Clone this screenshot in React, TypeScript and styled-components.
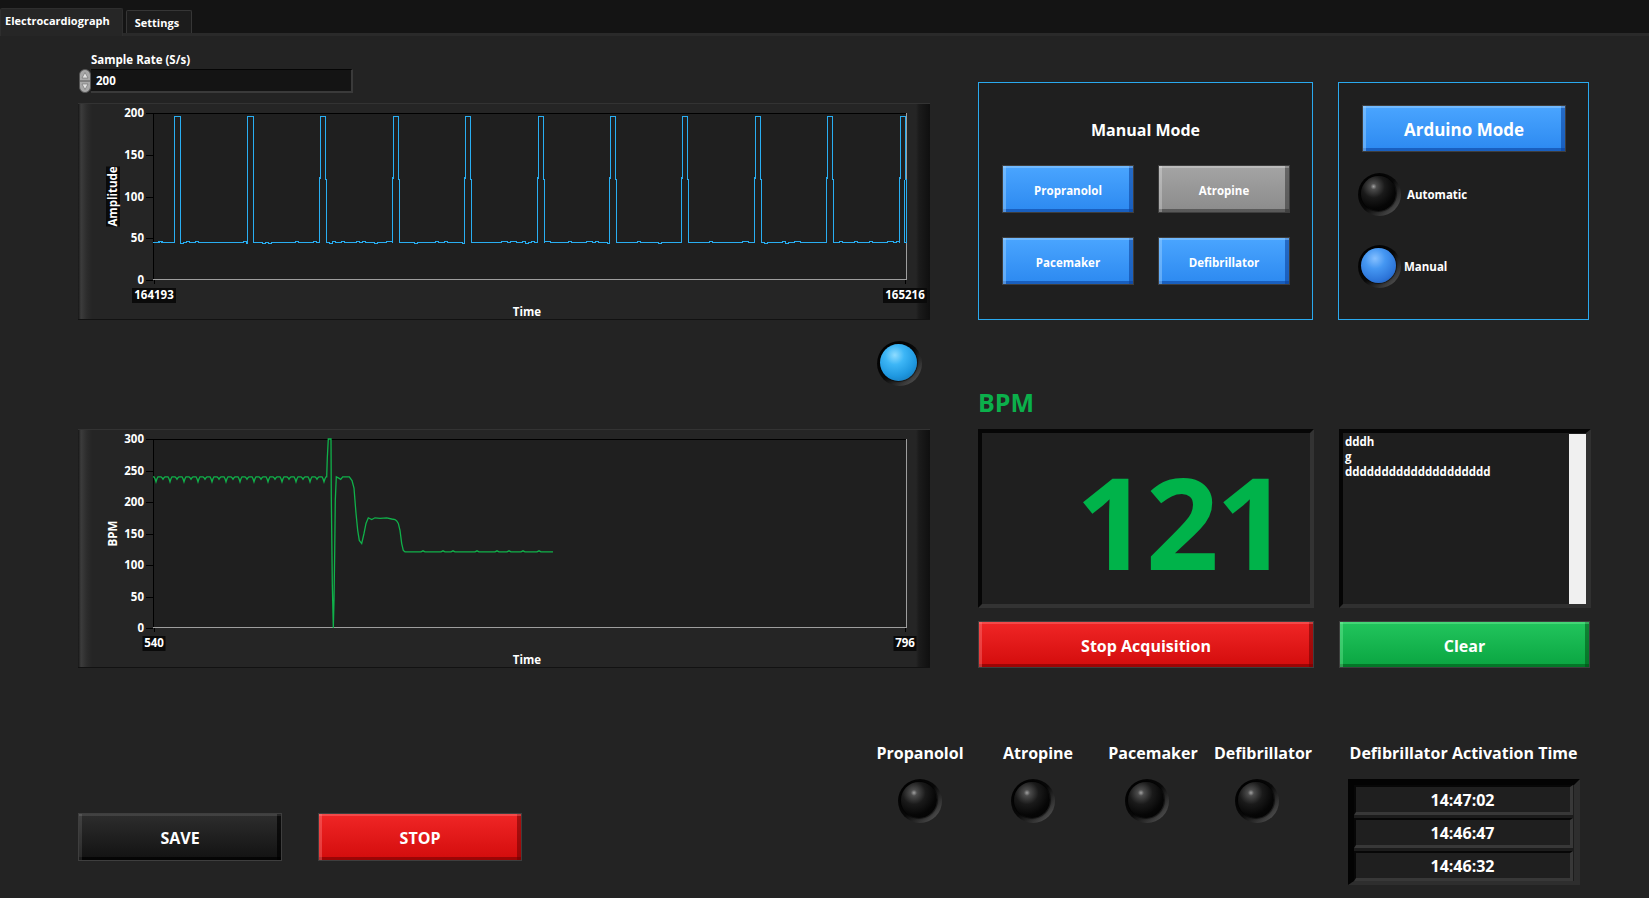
import React from "react";
import styled, { createGlobalStyle } from "styled-components";

const FONT = `"Open Sans", "Noto Sans", "DejaVu Sans", sans-serif`;

const GlobalStyle = createGlobalStyle`
  * { box-sizing: border-box; }
  html, body { margin: 0; padding: 0; background: #232323; }
  body { font-family: ${FONT}; color: #fff; }
`;

const Page = styled.div`
  width: 1649px;
  height: 898px;
  overflow: hidden;
  background: #232323;
  display: flex;
  flex-direction: column;
`;

/* ---------- tabs ---------- */
const TabBar = styled.div`
  height: 36px;
  flex: none;
  background: #141414;
  border-bottom: 3px solid #2a2a2a;
  display: flex;
  align-items: flex-end;
  gap: 3px;
`;

const Tab = styled.div<{ $active?: boolean }>`
  height: ${(p) => (p.$active ? 28 : 23)}px;
  margin-bottom: ${(p) => (p.$active ? -3 : 0)}px;
  padding: ${(p) => (p.$active ? "0 12px 4px 4px" : "0 12px 0 8px")};
  background: ${(p) => (p.$active ? "#262626" : "#1c1c1c")};
  border: 1px solid ${(p) => (p.$active ? "#2e2e2e" : "#363636")};
  border-bottom: none;
  border-radius: 2px 2px 0 0;
  font-size: 11px;
  font-weight: 700;
  color: #fff;
  display: flex;
  align-items: center;
`;

/* ---------- main layout ---------- */
const Main = styled.div`
  display: flex;
  gap: 48px;
  padding-left: 78px;
  height: 632px;
  flex: none;
`;

const LeftCol = styled.div`
  width: 852px;
  display: flex;
  flex-direction: column;
  padding-top: 17px;
`;

const RightCol = styled.div`
  width: 613px;
  display: flex;
  flex-direction: column;
  padding-top: 46px;
`;

const SmallLabel = styled.div`
  font-size: 11.5px;
  line-height: 14px;
  font-weight: 700;
  color: #fff;
  margin-left: 13px;
`;

const NumericRow = styled.div`
  display: flex;
  margin-top: 2px;
  margin-left: 1px;
  height: 24px;
`;

const NumBox = styled.div`
  width: 262px;
  height: 24px;
  background: #141414;
  border-right: 2px solid #3a3a3a;
  border-bottom: 2px solid #3a3a3a;
  border-top: 1px solid #050505;
  font-size: 11.5px;
  font-weight: 700;
  padding-left: 5px;
  display: flex;
  align-items: center;
`;

const GraphFrame = styled.div<{ $h: number; $mt: number }>`
  width: 852px;
  height: ${(p) => p.$h}px;
  margin-top: ${(p) => p.$mt}px;
  flex: none;
  border-top: 1px solid #333;
  border-bottom: 1px solid #121212;
  background: linear-gradient(
    to right,
    #161616 0,
    #3c3c3c 3px,
    #2c2c2c 9px,
    #252525 14px,
    #252525 calc(100% - 14px),
    #1b1b1b calc(100% - 11px),
    #0f0f0f 100%
  );
`;

const ChartSvg = styled.svg`
  display: block;
  text {
    font-family: ${FONT};
    font-weight: 700;
    font-size: 11.5px;
    fill: #fff;
  }
`;

const LedRow = styled.div`
  height: 109px;
  display: flex;
  justify-content: flex-end;
  align-items: flex-start;
  padding-top: 21px;
  padding-right: 8px;
`;

/* ---------- LEDs ---------- */
type LedTone = "off" | "cyan" | "blue";
const ledFace: Record<LedTone, string> = {
  off: "radial-gradient(circle at 36% 30%, #a0a0a0 0, #4c4c4c 9%, #1a1a1a 34%, #060606 65%, #000 100%)",
  cyan: "radial-gradient(circle at 40% 30%, #8fdcff 0, #3db6f6 28%, #1f98e0 62%, #0f6aa8 100%)",
  blue: "radial-gradient(circle at 40% 30%, #86c0ff 0, #4597f2 32%, #2c74d8 70%, #18489a 100%)",
};

const Led = styled.div<{ $tone: LedTone; $size?: number; $nudge?: number }>`
  width: ${(p) => p.$size ?? 44}px;
  height: ${(p) => p.$size ?? 44}px;
  flex: none;
  border-radius: 50%;
  margin-right: ${(p) => p.$nudge ?? 0}px;
  background: linear-gradient(135deg, #000 0%, #090909 50%, #626262 100%);
  padding: 3px 5px 5px 3px;
  display: flex;
  &::after {
    content: "";
    flex: 1;
    border-radius: 50%;
    background: ${(p) => ledFace[p.$tone]};
    box-shadow: 0 0 1px 1px rgba(0, 0, 0, 0.6);
  }
`;

/* ---------- buttons ---------- */
type Tone = "blue" | "gray" | "red" | "green" | "black";
const tones: Record<Tone, { top: string; bottom: string; hi: string; lo: string }> = {
  blue: { top: "#4aa5ff", bottom: "#2c89f0", hi: "rgba(160,210,255,0.45)", lo: "rgba(10,60,150,0.55)" },
  gray: { top: "#a4a4a4", bottom: "#8b8b8b", hi: "rgba(255,255,255,0.25)", lo: "rgba(40,40,40,0.5)" },
  red: { top: "#f02626", bottom: "#d30c0c", hi: "rgba(255,140,140,0.35)", lo: "rgba(110,0,0,0.55)" },
  green: { top: "#22c55d", bottom: "#0aa541", hi: "rgba(150,255,180,0.3)", lo: "rgba(0,80,20,0.55)" },
  black: { top: "#2d2d2d", bottom: "#121212", hi: "rgba(255,255,255,0.1)", lo: "rgba(0,0,0,0.7)" },
};

const BevelButton = styled.button<{ $tone: Tone; $w: number; $h: number; $size: number }>`
  width: ${(p) => p.$w}px;
  height: ${(p) => p.$h}px;
  flex: none;
  padding: 2px 0 0 0;
  border: 1px solid #3e3e3e;
  background: linear-gradient(${(p) => tones[p.$tone].top}, ${(p) => tones[p.$tone].bottom});
  box-shadow: inset 0 2px 0 ${(p) => tones[p.$tone].hi}, inset 3px 0 0 ${(p) => tones[p.$tone].hi},
    inset -4px 0 0 ${(p) => tones[p.$tone].lo}, inset 0 -3px 0 ${(p) => tones[p.$tone].lo};
  color: #fff;
  font-family: ${FONT};
  font-weight: 700;
  font-size: ${(p) => p.$size}px;
  display: flex;
  align-items: center;
  justify-content: center;
`;

/* ---------- right column ---------- */
const ModeRow = styled.div`
  display: flex;
  gap: 25px;
  height: 238px;
  flex: none;
`;

const ModeBox = styled.div<{ $w: number }>`
  width: ${(p) => p.$w}px;
  height: 238px;
  border: 1px solid #2aa9ee;
  background: #1f1f1f;
  display: flex;
  flex-direction: column;
`;

const ManualBox = styled(ModeBox)`
  padding: 36px 23px 0 23px;
`;

const BoxTitle = styled.div`
  font-size: 16px;
  font-weight: 700;
  line-height: 22px;
  text-align: center;
`;

const ButtonGrid = styled.div`
  margin-top: 24px;
  display: grid;
  grid-template-columns: 132px 132px;
  column-gap: 24px;
  row-gap: 24px;
`;

const ArduinoBox = styled(ModeBox)`
  padding: 22px 0 0 19px;
`;

const ArduinoButtonWrap = styled.div`
  padding-left: 4px;
  margin-bottom: 21px;
`;

const LedLine = styled.div<{ $gap: number; $mt: number }>`
  display: flex;
  align-items: center;
  gap: ${(p) => p.$gap}px;
  margin-top: ${(p) => p.$mt}px;
  font-size: 11.5px;
  font-weight: 700;
`;

const BpmTitle = styled.div`
  margin-top: 67px;
  height: 30px;
  line-height: 30px;
  font-size: 25px;
  font-weight: 700;
  color: #0bb04b;
`;

const DisplayRow = styled.div`
  margin-top: 12px;
  display: flex;
  gap: 25px;
  height: 179px;
  flex: none;
`;

const BpmDisplay = styled.div`
  width: 336px;
  height: 179px;
  background: #1f1f1f;
  border-top: 4px solid #060606;
  border-left: 4px solid #060606;
  border-right: 4px solid #333;
  border-bottom: 4px solid #333;
  display: flex;
  align-items: center;
  justify-content: flex-end;
  padding: 4px 24px 0 0;
  font-size: 128px;
  letter-spacing: -3px;
  line-height: 1;
  font-weight: 700;
  color: #00b34a;
`;

const TextBox = styled.div`
  width: 252px;
  height: 179px;
  background: #1e1e1e;
  border-top: 4px solid #050505;
  border-left: 4px solid #050505;
  border-right: 5px solid #303030;
  border-bottom: 4px solid #303030;
  display: flex;
`;

const TextLines = styled.div`
  flex: 1;
  padding: 1px 0 0 2px;
  font-size: 11.5px;
  line-height: 15px;
  font-weight: 700;
  white-space: pre;
`;

const ScrollTrack = styled.div`
  width: 17px;
  background: #f0f0f0;
  margin: 1px 0 0 0;
`;

const ButtonRow = styled.div`
  margin-top: 13px;
  display: flex;
  gap: 25px;
`;

/* ---------- bottom ---------- */
const BottomRow = styled.div`
  display: flex;
  align-items: flex-start;
  padding: 75px 0 0 78px;
`;

const SaveStopGroup = styled.div`
  display: flex;
  gap: 36px;
  margin-top: 70px;
`;

const IndicatorGroup = styled.div`
  display: flex;
  margin-left: 348px;
`;

const IndicatorCol = styled.div<{ $w: number; $gap: number }>`
  width: ${(p) => p.$w}px;
  margin-right: ${(p) => p.$gap}px;
  display: flex;
  flex-direction: column;
  align-items: center;
  gap: 16px;
`;

const BigLabel = styled.div`
  font-size: 16px;
  font-weight: 700;
  line-height: 20px;
  white-space: nowrap;
  text-align: center;
`;

const DefibGroup = styled.div`
  margin-left: 28px;
  width: 235px;
  display: flex;
  flex-direction: column;
  align-items: center;
  gap: 16px;
`;

const TimeTable = styled.div`
  width: 232px;
  height: 106px;
  background: #1c1c1c;
  border-top: 6px solid #030303;
  border-left: 6px solid #030303;
  border-right: 6px solid #2e2e2e;
  border-bottom: 4px solid #2e2e2e;
  display: flex;
  flex-direction: column;
  gap: 3px;
  padding-right: 1px;
`;

const TimeCell = styled.div`
  height: 30px;
  background: #1f1f1f;
  border-top: 2px solid #070707;
  border-left: 2px solid #070707;
  border-right: 3px solid #383838;
  border-bottom: 3px solid #383838;
  display: flex;
  align-items: center;
  justify-content: center;
  font-size: 16px;
  font-weight: 700;
`;

/* ---------- chart data ---------- */
const PX = 75;
const PY = 9;
const PW = 754;

function rnd(i: number) {
  const r = Math.sin(i * 12.9898 + 4.1) * 43758.5453;
  return r - Math.floor(r);
}

function buildEcg(h: number): string {
  const vy = (v: number) => h - (v * h) / 200;
  const pts: string[] = [];
  const push = (x: number, y: number) => pts.push(`${x.toFixed(1)},${y.toFixed(1)}`);
  const baseY = Math.round(vy(45)) + 0.5;
  const baseline = (from: number, to: number) => {
    for (let x = from; x < to; x += 3) {
      const r = rnd(x);
      const y = baseY + (r < 0.2 ? -1 : r > 0.88 ? 1 : 0);
      push(x, y);
      push(Math.min(x + 3, to), y);
    }
  };
  let cur = 0;
  for (let k = 0; k < 11; k++) {
    const s = Math.round(21.3 + k * 72.45) + 0.5;
    baseline(cur, s);
    push(s, baseY);
    const top = Math.round(vy(196)) + 0.5;
    if (k >= 2) {
      push(s, vy(122));
      push(s + 1, vy(122));
      push(s + 1, top);
    } else push(s, top);
    push(s + 6, top);
    if (k >= 2) {
      push(s + 6, vy(120));
      push(s + 7, vy(120));
      push(s + 7, baseY);
      cur = s + 7;
    } else {
      push(s + 6, baseY);
      cur = s + 6;
    }
  }
  baseline(cur, 751.5);
  push(751.5, baseY);
  push(751.5, vy(120));
  return pts.join(" ");
}

function buildBpm(h: number): string {
  const vy = (v: number) => h - (v * h) / 300;
  const pts: string[] = [];
  const push = (x: number, y: number) => pts.push(`${x.toFixed(1)},${y.toFixed(1)}`);
  for (let x = 0; x <= 173; x++) {
    const m = x % 7;
    const deep = Math.floor(x / 7) % 2 === 0;
    const dip = m === 3 ? (deep ? 8 : 4) : m === 2 || m === 4 ? (deep ? 3 : 1.5) : 0;
    push(x, vy(240 - dip));
  }
  const key: [number, number][] = [
    [770, 240], [772, 270], [775, 300], [783, 300], [784, 208], [787, 70], [790, 0],
    [792, 44], [794, 120], [796, 203], [799, 240], [806, 238], [812, 236], [818, 240],
    [838, 240], [846, 234], [852, 222], [858, 182], [863, 155], [868, 139], [875, 134],
    [882, 150], [888, 166], [895, 175], [905, 172], [915, 175], [930, 174], [950, 175],
    [965, 173], [975, 172], [980, 170], [985, 166], [990, 155], [995, 134], [1000, 123], [1005, 121],
  ];
  key.forEach(([X, v]) => push(X / 3 - 83, vy(v)));
  const blips = new Set([270, 290, 300, 324, 344, 356, 370, 386]);
  for (let x = 254; x <= 400; x += 2) push(x, vy(121 + (blips.has(x) ? 1.6 : 0)));
  return pts.join(" ");
}

type ChartProps = {
  height: number;
  plotH: number;
  yMax: number;
  yStep: number;
  xLeft: string;
  xRight: string;
  yTitle: string;
  yTitleBg?: boolean;
  points: string;
  color: string;
  crisp?: boolean;
};

function Chart(p: ChartProps) {
  const ticks: number[] = [];
  for (let v = 0; v <= p.yMax; v += p.yStep) ticks.push(v);
  const bottom = PY + p.plotH;
  const xLabelY = bottom + 15;
  const timeY = bottom + 32;
  const leftW = p.xLeft.length * 7 + 2;
  const rightW = p.xRight.length * 7 + 2;
  return (
    <ChartSvg width={852} height={p.height - 2} viewBox={`0 0 852 ${p.height - 2}`}>
      <rect x={PX} y={PY} width={PW} height={p.plotH} fill="#1f1f1f" />
      <line x1={PX + 0.5} y1={PY} x2={PX + 0.5} y2={bottom} stroke="#000" />
      <line x1={PX} y1={PY + 0.5} x2={PX + PW} y2={PY + 0.5} stroke="#000" />
      <line x1={PX + PW - 0.5} y1={PY} x2={PX + PW - 0.5} y2={bottom} stroke="#9e9e9e" />
      <line x1={PX} y1={bottom - 0.5} x2={PX + PW} y2={bottom - 0.5} stroke="#9e9e9e" />
      {ticks.map((v) => {
        const y = Math.round(bottom - (v / p.yMax) * p.plotH) + 0.5;
        return (
          <g key={v}>
            <line x1={PX - 7} y1={y} x2={PX} y2={y} stroke="#000" />
            <text x={PX - 9} y={y + 3} textAnchor="end">
              {v}
            </text>
          </g>
        );
      })}
      <line x1={PX + 1.5} y1={bottom} x2={PX + 1.5} y2={bottom + 4} stroke="#000" />
      <line x1={PX + PW - 1.5} y1={bottom} x2={PX + PW - 1.5} y2={bottom + 4} stroke="#000" />
      <rect x={PX + 1 - leftW / 2} y={xLabelY - 7} width={leftW} height={15} fill="#0a0a0a" />
      <text x={PX + 1} y={xLabelY + 4} textAnchor="middle">
        {p.xLeft}
      </text>
      <rect x={PX + PW - 2 - rightW / 2} y={xLabelY - 7} width={rightW} height={15} fill="#0a0a0a" />
      <text x={PX + PW - 2} y={xLabelY + 4} textAnchor="middle">
        {p.xRight}
      </text>
      <text x={449} y={timeY + 4} textAnchor="middle">
        Time
      </text>
      <g transform={`translate(35 ${PY + p.plotH / 2}) rotate(-90)`}>
        {p.yTitleBg && <rect x={-30} y={-7} width={60} height={14} fill="#0a0a0a" />}
        <text x={0} y={4} textAnchor="middle">
          {p.yTitle}
        </text>
      </g>
      <polyline
        transform={`translate(${PX} ${PY})`}
        points={p.points}
        fill="none"
        stroke={p.color}
        strokeWidth={1.3}
        shapeRendering={p.crisp ? "crispEdges" : "auto"}
      />
    </ChartSvg>
  );
}

function Spinner() {
  return (
    <svg width="12" height="24" viewBox="0 0 12 24">
      <rect x="0.5" y="0.5" width="11" height="23" rx="5.5" fill="#a8a8a8" stroke="#555" />
      <line x1="1" y1="12" x2="11" y2="12" stroke="#555" />
      <path d="M6 3.5 L9 9 L3 9 Z" fill="#e2e2e2" stroke="#6a6a6a" strokeWidth="0.6" />
      <path d="M6 20.5 L9 15 L3 15 Z" fill="#e2e2e2" stroke="#6a6a6a" strokeWidth="0.6" />
    </svg>
  );
}

const ECG_POINTS = buildEcg(167);
const BPM_POINTS = buildBpm(189);

const indicators: { label: string; w: number; gap: number; nudge: number }[] = [
  { label: "Propanolol", w: 100, gap: 18, nudge: 0 },
  { label: "Atropine", w: 100, gap: 15, nudge: 10 },
  { label: "Pacemaker", w: 100, gap: 5, nudge: 12 },
  { label: "Defibrillator", w: 110, gap: 0, nudge: 12 },
];

const times = ["14:47:02", "14:46:47", "14:46:32"];

export default function App() {
  return (
    <Page>
      <GlobalStyle />
      <TabBar>
        <Tab $active>Electrocardiograph</Tab>
        <Tab>Settings</Tab>
      </TabBar>
      <Main>
        <LeftCol>
          <SmallLabel>Sample Rate (S/s)</SmallLabel>
          <NumericRow>
            <Spinner />
            <NumBox>200</NumBox>
          </NumericRow>
          <GraphFrame $h={217} $mt={10}>
            <Chart
              height={217}
              plotH={167}
              yMax={200}
              yStep={50}
              xLeft="164193"
              xRight="165216"
              yTitle="Amplitude"
              yTitleBg
              points={ECG_POINTS}
              color="#29aef2"
              crisp
            />
          </GraphFrame>
          <LedRow>
            <Led $tone="cyan" $size={45} />
          </LedRow>
          <GraphFrame $h={239} $mt={0}>
            <Chart
              height={239}
              plotH={189}
              yMax={300}
              yStep={50}
              xLeft="540"
              xRight="796"
              yTitle="BPM"
              points={BPM_POINTS}
              color="#10b14a"
            />
          </GraphFrame>
        </LeftCol>
        <RightCol>
          <ModeRow>
            <ManualBox $w={335}>
              <BoxTitle>Manual Mode</BoxTitle>
              <ButtonGrid>
                <BevelButton $tone="blue" $w={132} $h={48} $size={11.5}>
                  Propranolol
                </BevelButton>
                <BevelButton $tone="gray" $w={132} $h={48} $size={11.5}>
                  Atropine
                </BevelButton>
                <BevelButton $tone="blue" $w={132} $h={48} $size={11.5}>
                  Pacemaker
                </BevelButton>
                <BevelButton $tone="blue" $w={132} $h={48} $size={11.5}>
                  Defibrillator
                </BevelButton>
              </ButtonGrid>
            </ManualBox>
            <ArduinoBox $w={251}>
              <ArduinoButtonWrap>
                <BevelButton $tone="blue" $w={204} $h={47} $size={17}>
                  Arduino Mode
                </BevelButton>
              </ArduinoButtonWrap>
              <LedLine $gap={6} $mt={0}>
                <Led $tone="off" $size={43} />
                Automatic
              </LedLine>
              <LedLine $gap={3} $mt={29}>
                <Led $tone="blue" $size={43} />
                Manual
              </LedLine>
            </ArduinoBox>
          </ModeRow>
          <BpmTitle>BPM</BpmTitle>
          <DisplayRow>
            <BpmDisplay>121</BpmDisplay>
            <TextBox>
              <TextLines>{"dddh\ng\ndddddddddddddddddddd"}</TextLines>
              <ScrollTrack />
            </TextBox>
          </DisplayRow>
          <ButtonRow>
            <BevelButton $tone="red" $w={336} $h={47} $size={16}>
              Stop Acquisition
            </BevelButton>
            <BevelButton $tone="green" $w={251} $h={47} $size={16}>
              Clear
            </BevelButton>
          </ButtonRow>
        </RightCol>
      </Main>
      <BottomRow>
        <SaveStopGroup>
          <BevelButton $tone="black" $w={204} $h={48} $size={16}>
            SAVE
          </BevelButton>
          <BevelButton $tone="red" $w={204} $h={48} $size={16}>
            STOP
          </BevelButton>
        </SaveStopGroup>
        <IndicatorGroup>
          {indicators.map((it) => (
            <IndicatorCol key={it.label} $w={it.w} $gap={it.gap}>
              <BigLabel>{it.label}</BigLabel>
              <Led $tone="off" $size={44} $nudge={it.nudge} />
            </IndicatorCol>
          ))}
        </IndicatorGroup>
        <DefibGroup>
          <BigLabel>Defibrillator Activation Time</BigLabel>
          <TimeTable>
            {times.map((t) => (
              <TimeCell key={t}>{t}</TimeCell>
            ))}
          </TimeTable>
        </DefibGroup>
      </BottomRow>
    </Page>
  );
}
